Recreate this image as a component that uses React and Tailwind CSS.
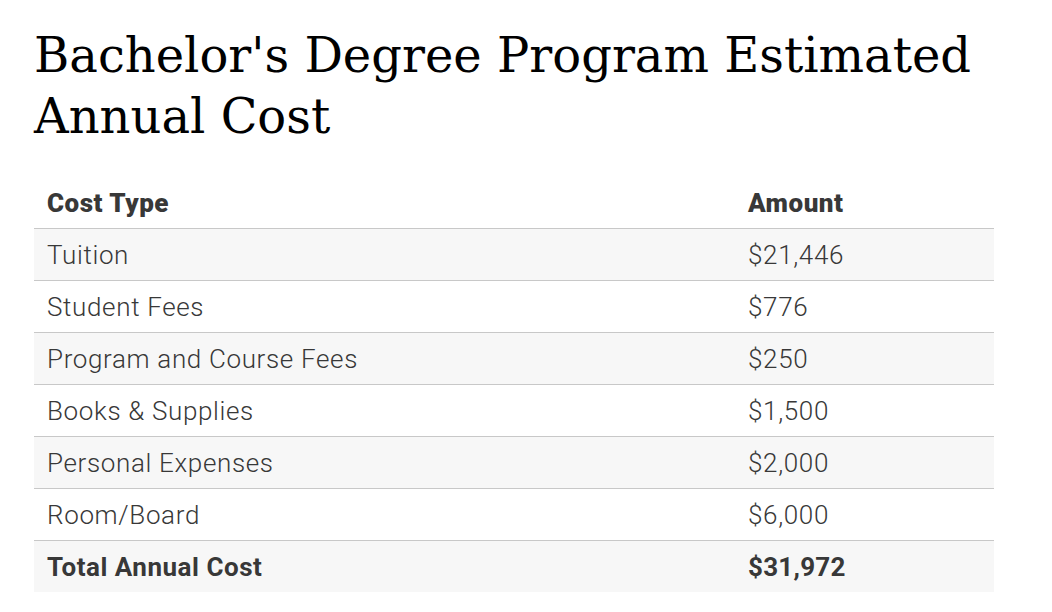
const rows = [
  ["Tuition", "$21,446"],
  ["Student Fees", "$776"],
  ["Program and Course Fees", "$250"],
  ["Books & Supplies", "$1,500"],
  ["Personal Expenses", "$2,000"],
  ["Room/Board", "$6,000"],
];

export default function App() {
  return (
    <div className="bg-white min-h-screen px-[34px] pt-[25px]">
      <div className="w-[960px]">
        <h1 className="font-['DejaVu_Serif',serif] text-[48px] leading-[61px] text-black">
          Bachelor's Degree Program Estimated Annual Cost
        </h1>
        <table className="w-full mt-[29px] border-collapse font-['Roboto',sans-serif] text-[26px] text-[#383838] tracking-[0.025em]">
          <thead>
            <tr className="h-[52px] border-b border-[#c8c8c8]">
              <th className="text-left font-black px-[13px] pt-[3px] w-[701px] tracking-[0.02em]">Cost Type</th>
              <th className="text-left font-black px-[13px] pt-[3px] tracking-[0.02em]">Amount</th>
            </tr>
          </thead>
          <tbody>
            {rows.map(([label, amount], i) => (
              <tr key={label} className={`h-[52px] border-b border-[#c8c8c8] ${i % 2 === 0 ? "bg-[#f7f7f7]" : "bg-white"}`}>
                <td className="px-[13px] pt-[3px] font-light">{label}</td>
                <td className="px-[13px] pt-[3px] font-light">{amount}</td>
              </tr>
            ))}
            <tr className="h-[52px] bg-[#f7f7f7]">
              <td className="px-[13px] pt-[3px] font-bold tracking-[0.02em]">Total Annual Cost</td>
              <td className="px-[13px] pt-[3px] font-bold tracking-[0.01em]">$31,972</td>
            </tr>
          </tbody>
        </table>
      </div>
    </div>
  );
}
